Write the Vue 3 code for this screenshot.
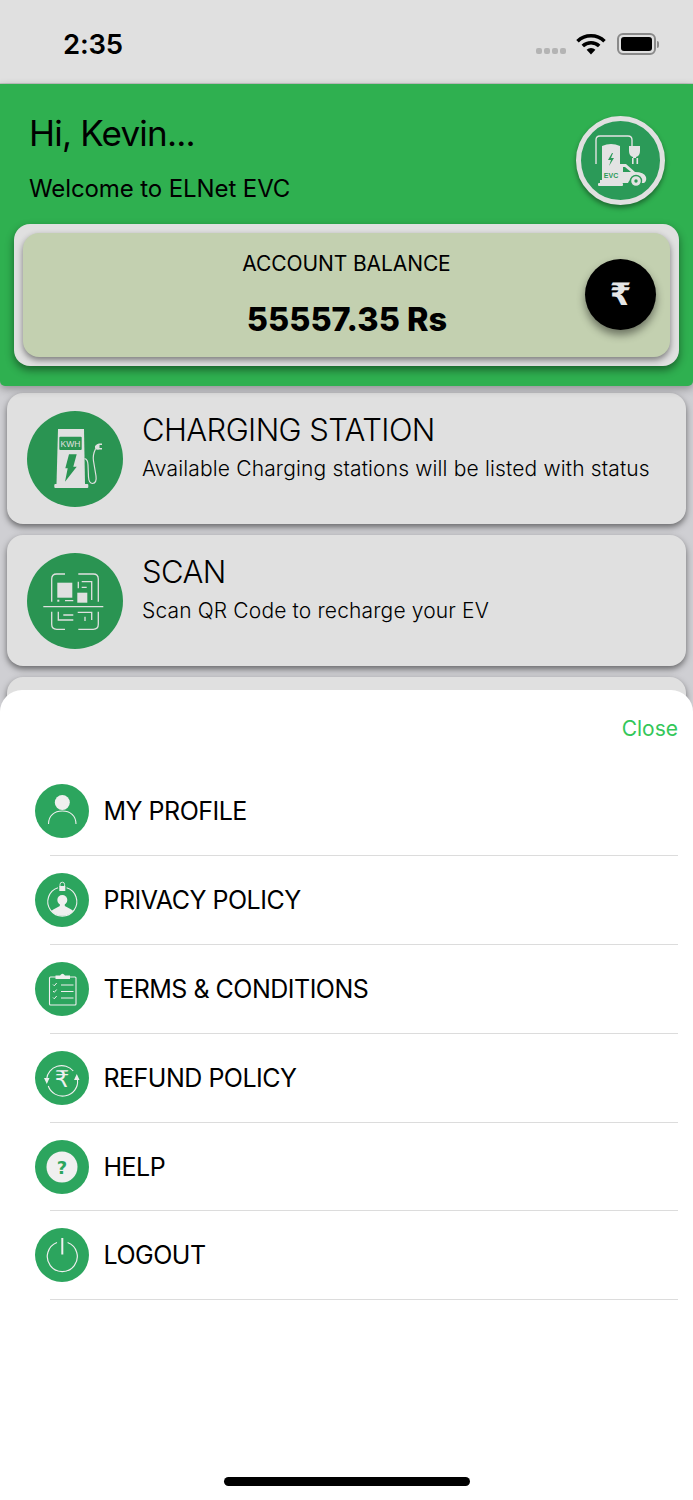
<template>
  <div class="page">
    <div class="status-bar">
      <span class="time">2:35</span>
      <div class="status-icons">
        <div class="signal"><i></i><i></i><i></i><i></i></div>
        <svg class="wifi" viewBox="0 0 30 22" width="30" height="22">
          <path d="M1.5 8.2a19.5 19.5 0 0 1 27 0" fill="none" stroke="#000" stroke-width="3.6" />
          <path d="M6.8 13a12 12 0 0 1 16.4 0" fill="none" stroke="#000" stroke-width="3.6" />
          <path d="M15 21.5 10.6 16.8a6.4 6.4 0 0 1 8.8 0z" fill="#000" />
        </svg>
        <div class="battery"><span></span></div>
        <div class="battery-cap"></div>
      </div>
    </div>

    <header class="hero">
      <div class="hero-top">
        <div class="greeting">
          <h1>Hi, Kevin...</h1>
          <p>Welcome to ELNet EVC</p>
        </div>
        <div class="avatar">
          <svg viewBox="0 0 79 79" width="79" height="79">
            <g transform="translate(-5 -5)" fill="#e3e3e3" stroke="none">
              <path d="M20 48V24q0-4 4-4h28q4 0 4 4v6" fill="none" stroke="#e3e3e3" stroke-width="1.4" />
              <path d="M53 30h11v5q0 5-4 6v1h-3v-1q-4-1-4-6z" />
              <rect x="56" y="42" width="1.6" height="6" />
              <rect x="60.5" y="42" width="1.6" height="6" />
              <path d="M26 30q9-4 18 0v24l-3 4-6 4-6-4-3-4z" />
              <path d="M36 37l-4 7h3l-2 6 5-8h-3l2-5z" fill="#2b9a58" />
              <rect x="26" y="51" width="18" height="13" fill="#e3e3e3" />
              <rect x="24" y="64" width="21" height="3" />
              <rect x="22" y="67" width="25" height="3" rx="1" />
              <path d="M44 48h6l9 8q9 0 11 5 1 4-2 6h-3a7 7 0 0 0-13 0h-8z" />
              <path d="M47 51h2l6 5h-8z" fill="#2b9a58" />
              <circle cx="60" cy="65" r="5.5" fill="#e3e3e3" stroke="#2b9a58" stroke-width="1.4" />
              <circle cx="60" cy="65" r="1.7" fill="#2b9a58" />
              <text x="35" y="61.5" text-anchor="middle" class="evc-label">EVC</text>
            </g>
          </svg>
        </div>
      </div>
      <div class="balance-shell">
        <div class="balance">
          <div class="balance-label">ACCOUNT BALANCE</div>
          <div class="balance-value">55557.35 Rs</div>
          <div class="rupee-btn">₹</div>
        </div>
      </div>
    </header>

    <section class="cards">
      <div class="card">
        <div class="card-icon">
          <svg viewBox="0 0 96 96" width="96" height="96">
            <path d="M31 18h26l1 55H29.500z" fill="#e0e0e0" />
            <rect x="27.300" y="73" width="34" height="4" rx="1" fill="#e0e0e0" />
            <rect x="32.300" y="25.700" width="22.400" height="13.300" rx="1" fill="#2a9452" />
            <text x="43.500" y="35.500" text-anchor="middle" class="kwh-label">KWH</text>
            <path d="M42 43.300h7.700l-3.400 12.400h3.400L38 70.700l2.700-13.400h-2.400z" fill="#2a9452" />
            <path d="M57.500 47.500Q61 48.500 61 54L61.500 66Q62 72.500 65.500 72.500 70 72 69 65L66.500 50Q65.500 44 68.500 38" fill="none" stroke="#e0e0e0" stroke-width="1.200" />
            <path d="M68 35q2-2.500 4-2.500h3v1.500h-2.500v3H75v1.500h-3q-2 1-4-1z" fill="#e0e0e0" />
          </svg>
        </div>
        <div class="card-text">
          <div class="card-title">CHARGING STATION</div>
          <div class="card-sub">Available Charging stations will be listed with status</div>
        </div>
      </div>
      <div class="card">
        <div class="card-icon">
          <svg viewBox="0 0 96 96" width="96" height="96">
            <g fill="none" stroke="#e0e0e0" stroke-width="1.300">
              <path d="M24.700 48.700V26q0-5 5-5H38" />
              <path d="M51.300 21h15q5 0 5 5v22.700" />
              <path d="M24.700 58.700V71.300q0 5 5 5H38" />
              <path d="M71.300 58.700V71.300q0 5-5 5H51.300" />
              <path d="M16.300 53.700h60" />
              <path d="M51.300 28.700v6.600M54.700 28.700h10V47M54.700 34.300h5M38 47.700h8.300" />
              <path d="M31.300 58.700V67h15M36.300 62h10" />
              <path d="M50.700 59.300h14V67M58 63.700V68" />
            </g>
            <rect x="30.300" y="29.700" width="15" height="15" fill="#e0e0e0" />
            <rect x="50.300" y="39.700" width="10" height="10" fill="#e0e0e0" />
            <rect x="30.300" y="46.700" width="2" height="2" fill="#e0e0e0" />
          </svg>
        </div>
        <div class="card-text">
          <div class="card-title">SCAN</div>
          <div class="card-sub">Scan QR Code to recharge your EV</div>
        </div>
      </div>
      <div class="card"></div>
    </section>

    <div class="sheet">
      <div class="sheet-close">Close</div>
      <ul class="menu">
        <li v-for="item in menuItems" :key="item.id" class="menu-row">
          <div class="menu-icon">
            <svg viewBox="0 0 54 54" width="54" height="54">
              <g v-if="item.id === 'profile'">
                <circle cx="27.300" cy="18.500" r="7.500" fill="#efefef" />
                <path d="M13.500 40C13.500 31.500 19.500 27 27.300 27S41 31.500 41 40" fill="none" stroke="#efefef" stroke-width="1.100" />
              </g>
              <g v-else-if="item.id === 'privacy'">
                <path d="M23 14.800a14.500 14.500 0 1 0 8.600 0" fill="none" stroke="#efefef" stroke-width="1.100" />
                <path d="M25 13.500v-2a2.300 2.300 0 0 1 4.600 0v2" fill="none" stroke="#efefef" stroke-width=".9" />
                <rect x="24.300" y="13" width="6" height="5" fill="#efefef" />
                <circle cx="27.300" cy="27" r="5" fill="#efefef" />
                <path d="M24.800 30.500v2.500l-6.500 3.500-2 1.500Q20.500 42.800 27.300 42.800T38.300 38l-2-1.500-6.500-3.500v-2.500z" fill="#efefef" />
              </g>
              <g v-else-if="item.id === 'terms'" fill="none" stroke="#efefef">
                <rect x="14.500" y="15" width="26.500" height="28" rx="1" stroke-width="1.100" />
                <path d="M20.500 17v-3.500h4.500q2.500-3.500 5 0h5V17z" fill="#efefef" stroke="none" />
                <path d="M26 23h12.500M26 29.500h12.500M26 36h12.500" stroke-width="1.100" />
                <path d="M18 22.500l1.300 1.300 2.400-2.800M18 29l1.300 1.300 2.400-2.800M18 35.500l1.300 1.300 2.400-2.800" stroke-width="1" />
              </g>
              <g v-else-if="item.id === 'refund'">
                <path d="M11.700 28A15 14.500 0 0 1 38.300 20M42.500 29A15 14.500 0 0 1 13.300 35" fill="none" stroke="#efefef" stroke-width="1.100" />
                <path d="M9 27h5.500l-2.700 6zM39 29h5.500l-2.700-6z" fill="#efefef" />
                <text x="27" y="36" text-anchor="middle" class="refund-rupee">₹</text>
              </g>
              <g v-else-if="item.id === 'help'">
                <circle cx="27" cy="27" r="15.500" fill="#f0f0f0" />
                <text x="27" y="33.500" text-anchor="middle" class="help-mark">?</text>
              </g>
              <g v-else fill="none" stroke="#efefef">
                <path d="M22 14.500a15 15 0 1 0 10.600 0" stroke-width="1.200" />
                <path d="M27.300 10v16.500" stroke-width="2" />
              </g>
            </svg>
          </div>
          <span class="menu-label">{{ item.label }}</span>
        </li>
      </ul>
      <div class="home-indicator"></div>
    </div>
  </div>
</template>

<script setup>
const menuItems = [
  { id: 'profile', label: 'MY PROFILE' },
  { id: 'privacy', label: 'PRIVACY POLICY' },
  { id: 'terms', label: 'TERMS & CONDITIONS' },
  { id: 'refund', label: 'REFUND POLICY' },
  { id: 'help', label: 'HELP' },
  { id: 'logout', label: 'LOGOUT' },
]
</script>

<style>
html,
body {
  margin: 0;
  background: #cfcfd3;
}
</style>

<style scoped>
.page {
  position: relative;
  width: 693px;
  height: 1500px;
  overflow: hidden;
  background: #cfcfd3;
  font-family: Inter, 'Liberation Sans', sans-serif;
  color: #000;
}

.status-bar {
  height: 83px;
  background: #e0e0e0;
  border-bottom: 1px solid #c4c4c4;
  box-sizing: content-box;
  display: flex;
  align-items: center;
  justify-content: space-between;
  padding: 0 34px 0 63px;
}

.time {
  font-size: 27.500px;
  font-weight: 600;
  margin-top: 5px;
  letter-spacing: -0.2px;
}

.status-icons {
  display: flex;
  align-items: center;
  margin-top: 5px;
}

.signal {
  display: flex;
  gap: 2px;
  margin: 13px 10px 0 0;
}

.signal i {
  width: 6px;
  height: 6px;
  border-radius: 2px;
  background: #b4b4b4;
}

.wifi {
  margin-right: 11px;
}

.battery {
  width: 39px;
  height: 22px;
  box-sizing: border-box;
  border: 2px solid #8a8a8a;
  border-radius: 6px;
  padding: 2px;
}

.battery span {
  display: block;
  height: 100%;
  border-radius: 3px;
  background: #000;
}

.battery-cap {
  width: 2px;
  height: 7px;
  margin-left: 1px;
  border-radius: 0 2px 2px 0;
  background: #8a8a8a;
}

.hero {
  height: 302px;
  box-sizing: border-box;
  background: #2fb050;
  border-radius: 0 0 5px 5px;
  box-shadow: 0 3px 8px rgba(0, 0, 0, 0.3);
  position: relative;
  padding: 31px 14px 0;
}

.hero-top {
  display: flex;
  justify-content: space-between;
  height: 109px;
  padding: 0 14px 0 15px;
}

.greeting h1 {
  margin: -1px 0 0;
  font-size: 35px;
  font-weight: 400;
  line-height: 38px;
  letter-spacing: -0.8px;
}

.greeting p {
  margin: 22px 0 0;
  font-size: 24px;
  line-height: 29px;
  letter-spacing: -0.1px;
}

.avatar {
  width: 79px;
  height: 79px;
  margin-top: 1px;
  border: 5px solid #e0e0e0;
  border-radius: 50%;
  background: #2b9a58;
  box-shadow: 0 3px 5px rgba(0, 0, 0, 0.4);
  overflow: hidden;
}

.evc-label {
  font-family: 'Liberation Sans', sans-serif;
  font-size: 7px;
  font-weight: 700;
  fill: #2b9a58;
}

.balance-shell {
  height: 142px;
  box-sizing: border-box;
  padding: 9px;
  background: #e0e0e0;
  border-radius: 16px;
  box-shadow: 0 4px 8px rgba(0, 0, 0, 0.45);
}

.balance {
  position: relative;
  height: 124px;
  box-sizing: border-box;
  padding-top: 18px;
  text-align: center;
  background: #c3d0b0;
  border-radius: 16px;
  box-shadow: 0 3px 6px rgba(0, 0, 0, 0.45);
}

.balance-label {
  font-size: 21px;
  line-height: 26px;
  letter-spacing: -0.1px;
}

.balance-value {
  margin-top: 23px;
  padding-left: 1px;
  font-size: 32.500px;
  font-weight: 800;
  line-height: 40px;
}

.rupee-btn {
  position: absolute;
  right: 14px;
  top: 26px;
  width: 71px;
  height: 71px;
  line-height: 70px;
  padding-left: 0;
  border-radius: 50%;
  background: #000;
  color: #e6e6e6;
  font-family: 'DejaVu Sans', sans-serif;
  font-size: 31px;
  font-weight: 700;
  box-shadow: 0 5px 8px rgba(0, 0, 0, 0.45);
}

.cards {
  display: flex;
  flex-direction: column;
  gap: 11px;
  padding: 7px 7px 0;
}

.card {
  display: flex;
  align-items: flex-start;
  height: 131px;
  flex: none;
  box-sizing: border-box;
  padding: 18px 0 0 20px;
  background: #e0e0e0;
  border-radius: 16px;
  box-shadow: 0 3px 6px rgba(0, 0, 0, 0.5);
}

.card-icon {
  width: 96px;
  height: 96px;
  border-radius: 50%;
  background: #2a9452;
  flex: none;
}

.card-text {
  margin-left: 19px;
}

.card-title {
  font-size: 31px;
  font-weight: 300;
  line-height: 38px;
  letter-spacing: -0.6px;
}

.card-sub {
  margin-top: 7px;
  font-size: 21px;
  font-weight: 300;
  line-height: 26px;
  letter-spacing: 0.15px;
}

.sheet {
  position: absolute;
  left: 0;
  right: 0;
  top: 690px;
  bottom: 0;
  background: #fff;
  border-radius: 22px 22px 0 0;
}

.sheet-close {
  position: absolute;
  top: 25px;
  right: 15px;
  font-size: 21px;
  line-height: 27px;
  color: #34c759;
}

.menu {
  list-style: none;
  margin: 0;
  padding: 77.500px 15px 0 35px;
}

.menu-row {
  position: relative;
  display: flex;
  align-items: center;
  height: 88.800px;
  box-sizing: border-box;
  padding-bottom: 1px;
}

.menu-row::after {
  content: '';
  position: absolute;
  left: 15px;
  right: 0;
  bottom: 0;
  height: 1px;
  background: #dcdcdc;
}

.menu-icon {
  width: 54px;
  height: 54px;
  border-radius: 50%;
  background: #2ca55e;
  flex: none;
}

.menu-label {
  margin-left: 14.500px;
  font-size: 25px;
  line-height: 30px;
  letter-spacing: -0.5px;
}

.kwh-label {
  font-family: 'Liberation Sans', sans-serif;
  font-size: 8.500px;
  fill: #e0e0e0;
}

.refund-rupee {
  font-family: 'DejaVu Sans', sans-serif;
  font-size: 23px;
  fill: #efefef;
}

.help-mark {
  font-family: 'DejaVu Sans', sans-serif;
  font-size: 18px;
  font-weight: 700;
  fill: #2ca55e;
}

.home-indicator {
  position: absolute;
  left: 224px;
  top: 787px;
  width: 246px;
  height: 9px;
  border-radius: 5px;
  background: #000;
}
</style>
